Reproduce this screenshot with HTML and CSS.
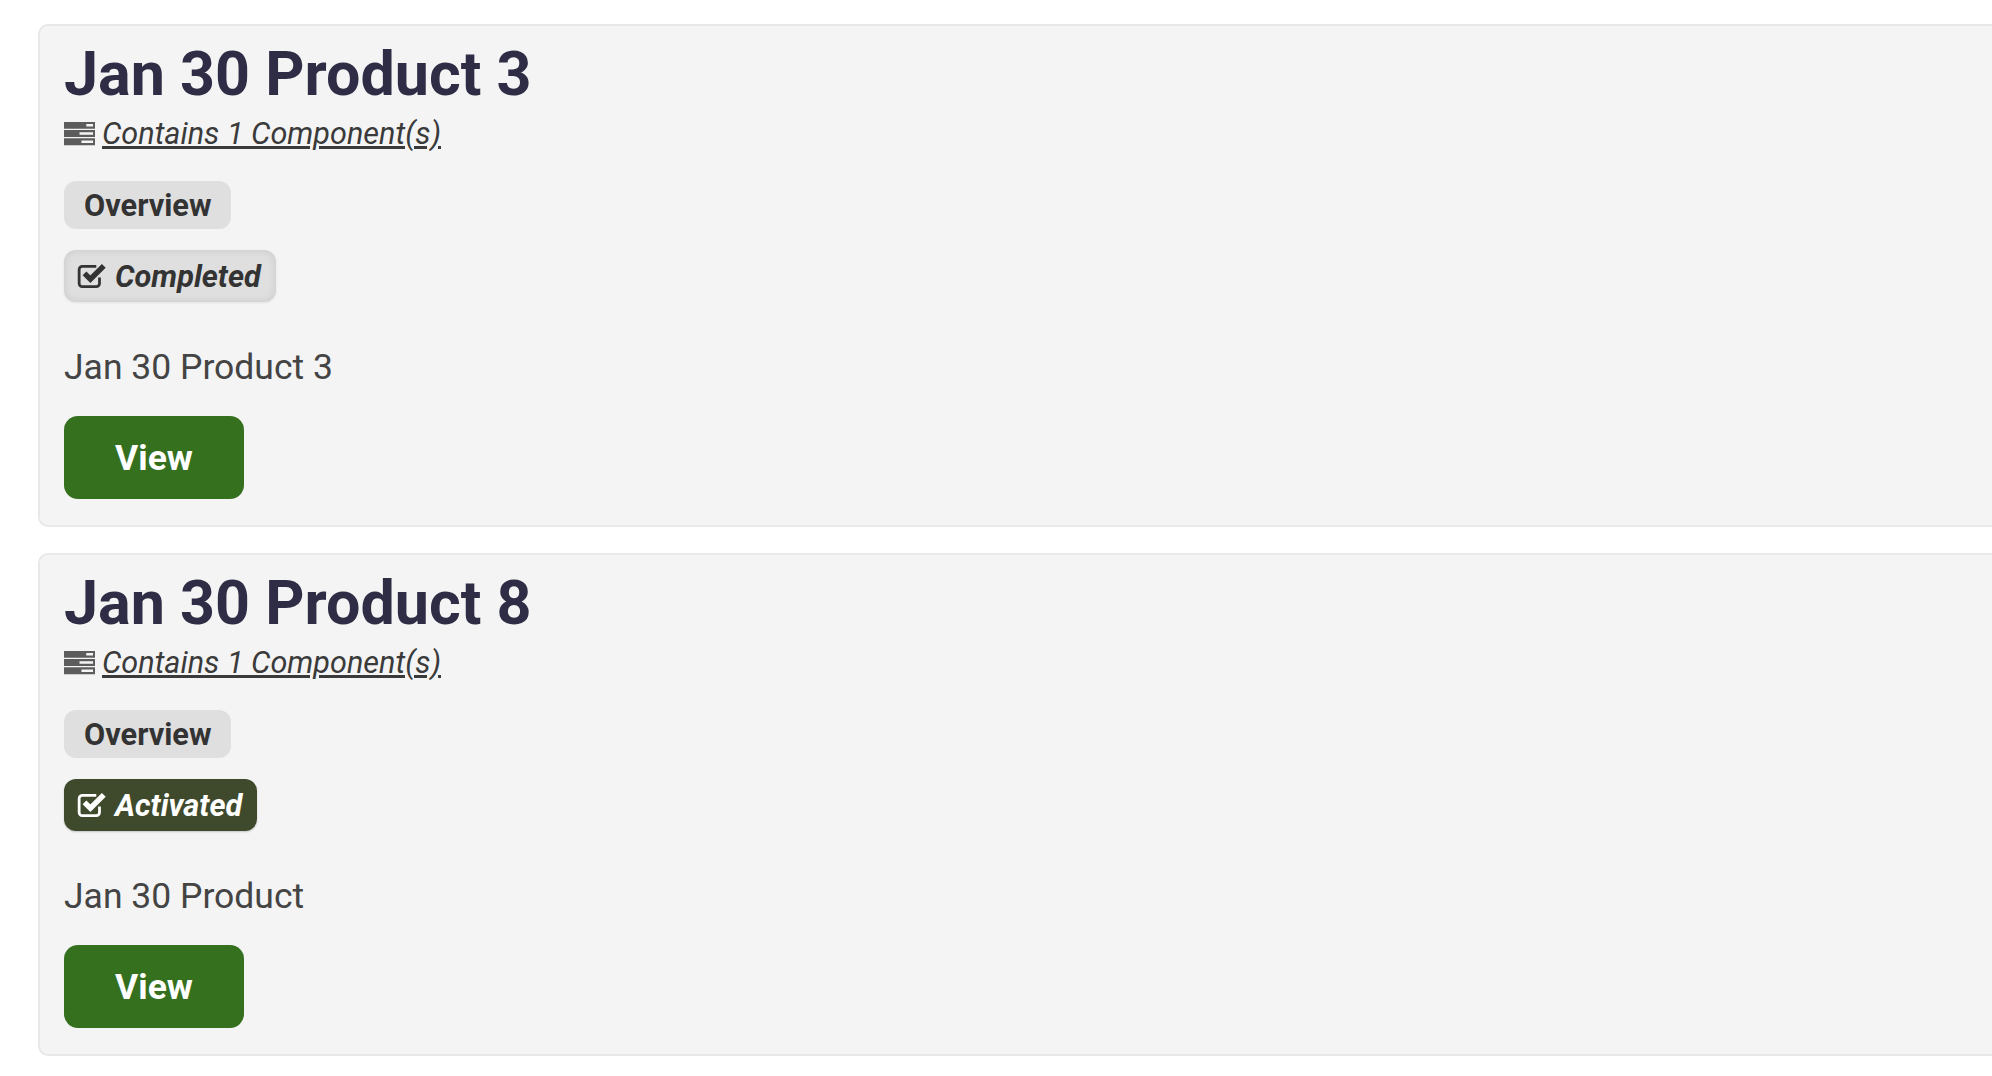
FILE: index.html
```html
<!DOCTYPE html>
<html lang="en">
<head>
    <meta charset="UTF-8">
    <title>Products</title>
    <link rel="stylesheet" href="styles.css">
</head>
<body>
    <div class="product-list">
        <div class="product-card">
            <h2 class="product-title">Jan 30 Product 3</h2>
            <div class="product-components">
                <svg class="icon-server" viewBox="0 0 32 24"><path fill-rule="evenodd" d="M0 0h32v7H0zM23 2.2v2.6h7V2.2zM0 8.5h32v7H0zM16 10.7v2.6h14v-2.6zM0 17h32v7H0zM18 19.2v2.6h12v-2.6z"/></svg>
                <a href="#">Contains 1 Component(s)</a>
            </div>
            <div class="badge-row"><span class="badge badge-tab">Overview</span></div>
            <div class="badge-row">
                <span class="badge badge-status badge-completed">
                    <svg class="icon-check" viewBox="0 0 28 26"><path class="box" d="M21 14.5V20a3 3 0 0 1-3 3H5a3 3 0 0 1-3-3V7a3 3 0 0 1 3-3h13"/><path class="tick" d="M7 10.5l5.5 5.5L25 3.5"/></svg>
                    Completed
                </span>
            </div>
            <p class="product-desc">Jan 30 Product 3</p>
            <a class="btn-view" href="#">View</a>
        </div>
        <div class="product-card">
            <h2 class="product-title">Jan 30 Product 8</h2>
            <div class="product-components">
                <svg class="icon-server" viewBox="0 0 32 24"><path fill-rule="evenodd" d="M0 0h32v7H0zM23 2.2v2.6h7V2.2zM0 8.5h32v7H0zM16 10.7v2.6h14v-2.6zM0 17h32v7H0zM18 19.2v2.6h12v-2.6z"/></svg>
                <a href="#">Contains 1 Component(s)</a>
            </div>
            <div class="badge-row"><span class="badge badge-tab">Overview</span></div>
            <div class="badge-row">
                <span class="badge badge-status badge-activated">
                    <svg class="icon-check" viewBox="0 0 28 26"><path class="box" d="M21 14.5V20a3 3 0 0 1-3 3H5a3 3 0 0 1-3-3V7a3 3 0 0 1 3-3h13"/><path class="tick" d="M7 10.5l5.5 5.5L25 3.5"/></svg>
                    Activated
                </span>
            </div>
            <p class="product-desc">Jan 30 Product</p>
            <a class="btn-view" href="#">View</a>
        </div>
    </div>
</body>
</html>
```

FILE: styles.css
```css
* {
    margin: 0;
    padding: 0;
    box-sizing: border-box;
}

html, body {
    height: 100%;
    overflow: hidden;
}

body {
    font-family: Roboto, "Liberation Sans", sans-serif;
    background: #fff;
    color: #444;
}

.product-list {
    display: flex;
    flex-direction: column;
    gap: 26px;
    padding: 24px 0 0 38px;
    margin-right: -40px;
}

.product-card {
    background: #f4f4f4;
    border: 2px solid #e8e8e8;
    border-radius: 10px;
    padding: 14px 25px 25px 24px;
    height: 503px;
}

.product-title {
    font-size: 61px;
    font-weight: 700;
    line-height: 68px;
    color: #2e2d45;
}

.product-components {
    display: flex;
    align-items: center;
    gap: 7px;
    margin-top: 4px;
    height: 42px;
    font-size: 30.6px;
    font-style: italic;
}

.product-components a {
    color: #3a3a3a;
}

.icon-server {
    width: 31px;
    height: 25px;
    fill: #5c5c5c;
}

.badge-row {
    display: flex;
    margin-top: 27px;
}

.badge-row + .badge-row {
    margin-top: 21px;
}

.badge {
    display: inline-flex;
    align-items: center;
    font-size: 30.72px;
    font-weight: 700;
    border-radius: 12px;
    height: 48px;
    padding: 0 20px;
    background: #dfdfdf;
    color: #333;
}

.badge-status {
    height: 52px;
    padding: 0 15px 0 13px;
    gap: 8px;
    font-style: italic;
}

.badge-completed {
    background: #dfdfdf;
    box-shadow: inset 0 0 8px rgba(0, 0, 0, 0.1), 0 1px 3px rgba(0, 0, 0, 0.08);
}

.badge-activated {
    background: #3f4a2c;
    color: #fff;
    box-shadow: 0 1px 2px rgba(0, 0, 0, 0.2);
}

.icon-check {
    width: 30px;
    height: 28px;
    fill: none;
    stroke: currentColor;
}

.icon-check .box {
    stroke-width: 2.6;
}

.icon-check .tick {
    stroke-width: 5;
}

.product-desc {
    font-size: 35.5px;
    line-height: 44px;
    margin-top: 43px;
}

.btn-view {
    display: flex;
    align-items: center;
    justify-content: center;
    width: 180px;
    height: 83px;
    margin-top: 27px;
    background: #35701f;
    border-radius: 14px;
    color: #fff;
    font-size: 35.5px;
    font-weight: 700;
    text-decoration: none;
}
```
